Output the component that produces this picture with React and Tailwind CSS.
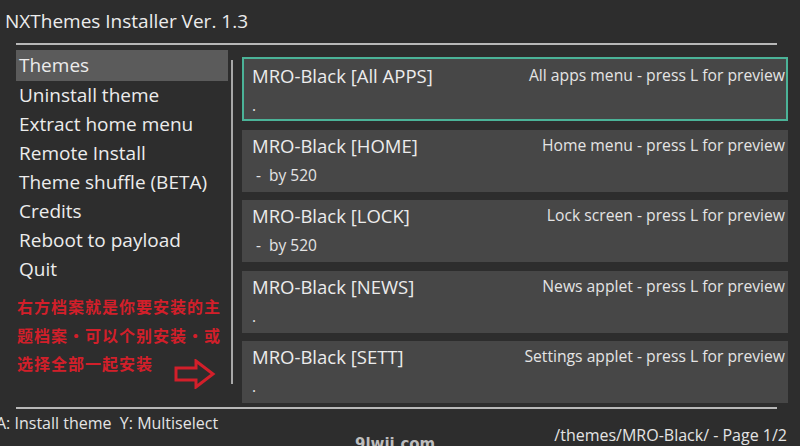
import React from 'react';

const font = { fontFamily: '"Open Sans", "Noto Sans", sans-serif' };

const menu = [
  'Themes',
  'Uninstall theme',
  'Extract home menu',
  'Remote Install',
  'Theme shuffle (BETA)',
  'Credits',
  'Reboot to payload',
  'Quit',
];

const themes = [
  { name: 'MRO-Black [All APPS]', desc: 'All apps menu - press L for preview', sub: '.', active: true },
  { name: 'MRO-Black [HOME]', desc: 'Home menu - press L for preview', sub: ' -  by 520' },
  { name: 'MRO-Black [LOCK]', desc: 'Lock screen - press L for preview', sub: ' -  by 520' },
  { name: 'MRO-Black [NEWS]', desc: 'News applet - press L for preview', sub: '.' },
  { name: 'MRO-Black [SETT]', desc: 'Settings applet - press L for preview', sub: '.' },
];

const Arrow = () => (
  <svg width="42" height="30" viewBox="0 0 42 30" className="ml-[21px] mt-[10px]">
    <path
      d="M2 9 H22 V2 L39 15 L22 28 V21 H2 Z"
      fill="none"
      stroke="#d21f2a"
      strokeWidth="3"
      strokeLinejoin="miter"
    />
  </svg>
);

const ThemeCard = ({ name, desc, sub, active }) => (
  <div
    className={
      active
        ? 'h-[64px] bg-[#474747] border-2 border-[#4bb398] pl-[8px] pr-[1px] pt-[3px]'
        : 'h-[62px] bg-[#474747] pl-[10px] pr-[3px] pt-[2px]'
    }
  >
    <div className="flex justify-between items-start">
      <span className="text-[18.5px] leading-[28px] text-[#ececec]">{name}</span>
      <span className="text-[15.7px] leading-[26px] text-[#e4e4e4]">{desc}</span>
    </div>
    <div className="text-[15.5px] leading-[30px] text-[#e4e4e4] whitespace-pre">{sub}</div>
  </div>
);

export default function App() {
  return (
    <div className="relative w-[800px] h-[446px] overflow-hidden bg-[#2d2d2d] text-[#ececec]" style={font}>
      {/* header */}
      <div className="h-[43px] pl-[5px] pt-[7px] text-[19px] leading-[28px]">NXThemes Installer Ver. 1.3</div>
      <div className="ml-[16px] w-[761px] h-[2px] bg-[#b8b8b8]" />

      {/* body */}
      <div className="flex h-[362px] pl-[16px]">
        <div className="w-[212px] pt-[5px]">
          {menu.map((m, i) => (
            <div
              key={m}
              className={
                i === 0
                  ? 'h-[31px] bg-[#5b5b5b] pl-[3px] text-[19px] leading-[31px]'
                  : 'h-[29px] pl-[3px] text-[19px] leading-[29px]'
              }
            >
              {m}
            </div>
          ))}
          <div
            className="mt-[8px] pl-[1px] text-[16px] leading-[28.5px] tracking-[1px] font-bold text-[#d21f2a]"
            style={{ fontFamily: '"Noto Sans CJK SC", sans-serif' }}
          >
            <div>右方档案就是你要安装的主</div>
            <div>题档案・可以个别安装・或</div>
            <div className="flex items-start h-[28.5px]">
              <span>选择全部一起安装</span>
              <Arrow />
            </div>
          </div>
        </div>

        <div className="ml-[3px] mt-[15px] w-[2px] h-[324px] bg-[#a8a8a8]" />

        <div className="ml-[9px] w-[546px] pt-[12px] flex flex-col gap-[8.5px]">
          {themes.map((t) => (
            <ThemeCard key={t.name} {...t} />
          ))}
        </div>
      </div>

      <div className="ml-[16px] w-[761px] h-[2px] bg-[#b8b8b8]" />

      {/* footer */}
      <div className="flex justify-between h-[37px]">
        <div className="ml-[-4px] pt-[3px] text-[16px] leading-[22px] text-[#e4e4e4] whitespace-pre">
          A: Install theme  Y: Multiselect
        </div>
        <div className="self-end mb-[-1px] mr-[13px] text-[16px] leading-[24px] text-[#e4e4e4]">
          /themes/MRO-Black/ - Page 1/2
        </div>
      </div>

      {/* watermark */}
      <div
        className="absolute left-[355px] top-[432px] text-[15px] leading-[24px] font-bold text-[#bdbdbd]"
        style={{ fontFamily: '"DejaVu Sans", sans-serif' }}
      >
        9lwii.com
      </div>
    </div>
  );
}
